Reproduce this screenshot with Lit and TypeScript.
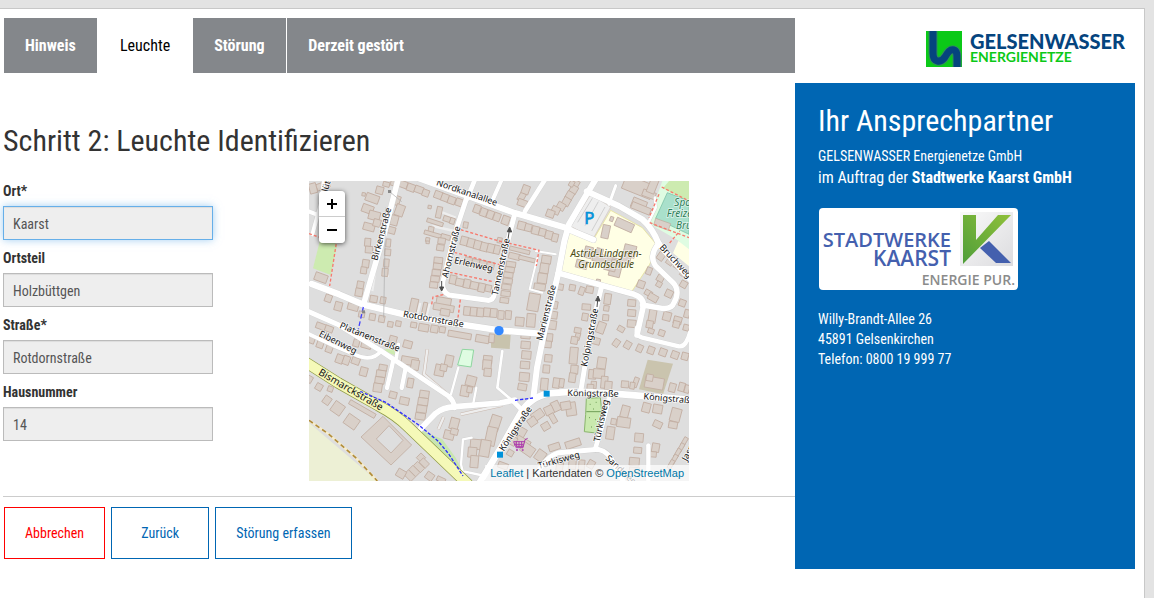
import { LitElement, html, svg, css } from "lit";
import { customElement, property } from "lit/decorators.js";

type Box = [number, number, number, number, number];

// Building footprints: centre x, centre y, width, height, rotation in degrees.
const BUILDINGS: Box[] = [
  // around Birkenstraße
  [42, 14, 40, 20, -20], [12, 22, 22, 30, -15], [212, 28, 22, 22, 15], [190, 52, 40, 24, 20], [176, 84, 34, 24, 20],
  [196, 104, 34, 26, 15], [180, 138, 34, 22, 15], [204, 126, 22, 22, 15], [232, 10, 20, 14, 15], [164, 40, 10, 10, 10],
  [262, 58, 22, 28, 20], [272, 88, 26, 34, 20], [256, 118, 22, 30, 15], [248, 148, 22, 20, 15], [176, 184, 18, 24, 5],
  [180, 206, 22, 20, 5], [238, 186, 14, 24, 5], [236, 214, 18, 20, 5], [170, 248, 20, 24, 8], [164, 268, 18, 20, 8],
  [232, 246, 16, 24, 5], [228, 274, 18, 24, 5], [154, 312, 20, 22, 10], [150, 334, 22, 24, 10],
  // top row along Nordkanalallee
  [256, 6, 22, 18, 18], [282, 10, 26, 20, 20], [306, 20, 24, 22, 20], [330, 26, 26, 20, 20], [350, 36, 20, 20, 20],
  [388, 42, 24, 22, 20], [408, 50, 22, 22, 20], [428, 58, 22, 22, 20], [450, 64, 20, 22, 20],
  [504, 84, 20, 24, 20], [524, 94, 20, 24, 20], [544, 101, 20, 24, 20], [564, 108, 20, 24, 20], [590, 118, 22, 26, 20],
  // west of Ahornstraße
  [362, 78, 10, 10, 10], [390, 94, 16, 34, 12], [378, 124, 50, 12, 18], [414, 114, 22, 16, 18], [430, 120, 14, 18, 18],
  [366, 146, 16, 18, 10], [372, 160, 54, 12, 16], [410, 168, 28, 14, 16], [356, 176, 12, 12, 10], [356, 184, 10, 8, 5],
  [398, 180, 22, 18, 8], [394, 200, 22, 18, 8], [388, 238, 26, 18, 6], [386, 256, 26, 18, 6], [382, 275, 26, 18, 6],
  [378, 294, 26, 18, 6], [374, 312, 24, 18, 6], [470, 132, 14, 18, 10],
  // Erlenweg rows
  [466, 180, 22, 26, 14], [486, 186, 22, 26, 14], [506, 192, 22, 26, 14], [526, 198, 22, 26, 14], [546, 202, 22, 26, 14], [564, 206, 18, 26, 14],
  [478, 240, 22, 22, 12], [500, 246, 22, 22, 12], [522, 250, 22, 22, 12], [544, 254, 22, 22, 12],
  [432, 296, 20, 26, 12], [452, 304, 24, 22, 12], [474, 308, 20, 26, 12], [496, 314, 24, 22, 12], [518, 320, 20, 26, 12], [538, 322, 18, 20, 12],
  // between Rotdornstraße and Platanenstraße
  [36, 290, 38, 24, 20], [58, 352, 20, 22, 20], [88, 376, 22, 26, 15], [132, 378, 32, 20, 15], [158, 400, 18, 18, 10],
  [190, 408, 18, 20, 10], [218, 414, 18, 20, 10], [244, 430, 16, 16, 10], [268, 428, 16, 16, 10], [314, 432, 18, 16, 10],
  [194, 354, 22, 20, 10], [222, 358, 16, 20, 10], [314, 376, 22, 46, 12], [346, 386, 12, 44, 12],
  [404, 362, 44, 24, 10], [404, 380, 62, 20, 10], [408, 394, 28, 20, 10],
  [474, 390, 20, 26, 5], [494, 392, 20, 26, 5], [514, 394, 20, 26, 5], [534, 394, 20, 26, 5], [554, 396, 20, 26, 5], [576, 402, 18, 26, 5], [598, 402, 18, 26, 5],
  [344, 440, 30, 22, 10], [376, 444, 22, 22, 10], [400, 446, 18, 18, 10], [36, 436, 30, 18, 20], [60, 444, 24, 18, 20],
  [8, 474, 20, 26, 20], [34, 488, 20, 26, 20], [62, 500, 20, 30, 20], [92, 534, 22, 26, 20], [112, 538, 20, 26, 20],
  [140, 540, 24, 20, 20], [142, 486, 18, 22, 15], [172, 492, 30, 20, 15], [252, 476, 22, 22, 15], [296, 490, 26, 22, 15],
  [164, 572, 22, 26, 15], [222, 560, 24, 18, 10], [216, 578, 28, 20, 8], [212, 598, 28, 20, 8], [206, 620, 26, 26, 8],
  [302, 540, 50, 24, 10], [318, 552, 24, 30, 10], [304, 606, 18, 28, 10], [252, 642, 22, 20, 15], [286, 660, 28, 22, 12],
  [346, 640, 28, 22, 8], [342, 662, 30, 22, 8], [338, 684, 30, 22, 8], [334, 706, 30, 20, 8],
  // south of Bismarckstraße
  [0, 594, 20, 20, 30], [30, 618, 20, 20, 30], [64, 624, 16, 16, 20], [54, 658, 22, 24, 35], [86, 682, 34, 34, 35],
  [128, 722, 40, 34, 35], [160, 684, 88, 14, 30],
  [336, 830, 20, 20, 45], [346, 846, 26, 18, 45], [330, 858, 30, 18, 45], [316, 870, 30, 18, 45], [302, 884, 30, 20, 45], [276, 878, 26, 24, 30],
  [362, 886, 24, 22, 35], [396, 896, 26, 14, 25],
  // centre
  [452, 462, 70, 18, 10], [520, 474, 40, 22, 10], [548, 472, 16, 26, 5], [420, 540, 24, 34, 12], [392, 568, 28, 34, 12],
  [404, 560, 20, 20, 12], [536, 536, 26, 24, 5], [534, 552, 26, 30, 5], [536, 574, 22, 24, 5], [486, 600, 30, 30, 15], [468, 630, 26, 32, 10], [482, 626, 16, 18, 10],
  [436, 728, 26, 34, 15], [420, 762, 30, 26, 15], [436, 752, 22, 18, 15],
  [558, 726, 30, 46, 18], [546, 766, 30, 56, 12], [500, 790, 32, 30, 5], [490, 814, 26, 30, 5], [496, 842, 24, 36, 5], [528, 802, 30, 50, 10],
  // north centre
  [638, 48, 26, 18, -60], [650, 26, 22, 26, 20], [640, 66, 28, 20, 20],
  [800, 10, 18, 24, 30], [794, 26, 22, 24, 30], [782, 44, 22, 24, 30], [772, 62, 22, 24, 30], [756, 76, 24, 22, 30], [740, 88, 24, 22, 25], [724, 98, 24, 22, 20], [788, 8, 14, 18, 30],
  [638, 134, 24, 24, 14], [658, 140, 20, 22, 14], [680, 148, 22, 24, 14], [700, 154, 20, 22, 14], [720, 162, 22, 24, 14], [738, 170, 18, 24, 14],
  [632, 208, 62, 12, 14], [616, 226, 34, 18, 14], [654, 234, 50, 12, 14],
  [712, 236, 28, 24, 8], [706, 262, 26, 30, 8], [700, 292, 28, 30, 8], [692, 318, 34, 20, 8], [674, 364, 34, 52, 10], [666, 418, 26, 40, 5], [632, 422, 26, 26, 5],
  [606, 250, 28, 16, 8], [602, 266, 28, 16, 8], [598, 282, 28, 16, 8], [596, 300, 28, 16, 8], [592, 318, 28, 16, 8], [590, 338, 28, 16, 8], [586, 358, 26, 16, 8],
  [572, 178, 14, 16, 10],
  // school and surroundings
  [946, 132, 56, 26, 24], [908, 114, 10, 14, 20], [890, 152, 22, 40, 12], [838, 214, 24, 34, 14], [818, 250, 34, 24, 14],
  [872, 210, 20, 16, 14], [890, 236, 80, 24, 14], [920, 262, 34, 50, 14], [962, 210, 36, 36, 14], [950, 232, 30, 30, 14], [902, 262, 34, 14, 14], [868, 300, 12, 10, 10],
  [988, 18, 92, 44, 22], [1020, 40, 40, 20, 20], [990, 70, 44, 30, 22], [996, 82, 60, 20, 22], [1032, 12, 24, 50, 22],
  [754, 318, 18, 18, 10], [790, 320, 18, 18, 10], [818, 330, 16, 24, 20], [842, 326, 22, 20, 10], [832, 378, 26, 18, 5],
  [828, 408, 18, 22, 10], [896, 354, 20, 32, 8], [892, 382, 16, 16, 8], [890, 410, 18, 18, 5],
  [736, 372, 20, 22, 10], [732, 402, 26, 22, 8], [730, 432, 24, 26, 8],
  [968, 366, 24, 20, 5], [968, 396, 24, 20, 5], [968, 428, 26, 22, 5], [996, 310, 22, 22, 20], [1018, 336, 22, 16, 30], [1032, 350, 30, 20, 30], [1020, 270, 16, 22, 20],
  [1056, 226, 20, 24, 35], [1084, 240, 20, 24, 35], [1106, 254, 20, 20, 35], [1126, 276, 20, 24, 35], [1054, 292, 20, 20, 30], [1080, 338, 22, 22, 25], [1050, 310, 16, 16, 30],
  [1124, 310, 20, 20, 30], [1120, 366, 20, 20, 20], [1074, 406, 24, 26, 15], [1030, 406, 22, 40, 10], [1022, 430, 20, 22, 10], [1106, 418, 24, 22, 15], [1134, 398, 16, 24, 15],
  [1102, 430, 20, 20, 15], [1132, 440, 18, 18, 15],
  // Marienstraße south
  [650, 464, 28, 18, 5], [650, 492, 28, 22, 5], [652, 522, 28, 24, 5], [648, 552, 28, 22, 5], [646, 588, 30, 26, 5], [640, 618, 26, 20, 10],
  [722, 470, 18, 24, 5], [716, 490, 22, 20, 5], [718, 532, 22, 22, 5], [712, 564, 20, 24, 5], [706, 610, 22, 36, 5], [742, 606, 20, 30, 8], [758, 606, 14, 26, 8],
  [806, 466, 14, 22, 15], [796, 478, 20, 22, 10], [794, 524, 24, 50, 5], [796, 566, 22, 26, 5], [790, 590, 20, 28, 8], [806, 448, 20, 16, 10],
  [876, 440, 24, 34, 20], [860, 480, 26, 20, 15], [878, 546, 26, 34, 8], [850, 580, 22, 28, 5], [870, 578, 34, 28, 5], [886, 604, 20, 36, 5], [854, 612, 16, 22, 5], [898, 614, 22, 26, 5], [844, 620, 20, 20, 5],
  [922, 486, 18, 22, 35], [956, 492, 20, 22, 30], [992, 502, 18, 22, 25], [1026, 508, 20, 22, 20], [1062, 514, 22, 22, 20], [1098, 522, 22, 22, 20], [1128, 526, 20, 22, 15],
  [936, 444, 20, 16, 30], [1026, 450, 18, 14, 20], [1058, 456, 18, 18, 20],
  [1036, 606, 56, 34, 10], [1022, 590, 20, 20, 10], [948, 610, 22, 20, 5], [980, 604, 14, 30, 20], [970, 614, 14, 20, 10], [1090, 620, 20, 26, 15], [1118, 618, 18, 26, 15], [1134, 624, 14, 24, 15],
  [948, 692, 24, 36, 15], [944, 724, 40, 30, 8], [914, 722, 16, 18, 10], [904, 756, 24, 38, 8],
  [1012, 680, 24, 28, 15], [1046, 684, 28, 26, 10], [1100, 702, 30, 40, 15], [1092, 732, 26, 20, 10], [1046, 730, 26, 20, 25],
  [990, 770, 26, 26, 5], [986, 808, 24, 18, 5], [1040, 800, 22, 26, 10], [1032, 820, 20, 16, 5], [976, 842, 30, 24, 5], [976, 868, 30, 18, 5],
  [1126, 782, 28, 12, -60], [1116, 800, 28, 12, -60], [1106, 816, 28, 12, -60], [1096, 834, 28, 12, -60], [1086, 850, 28, 12, -60],
  [786, 684, 30, 40, -8], [770, 674, 30, 24, -10], [740, 676, 24, 30, -25], [720, 688, 26, 26, -25], [732, 712, 16, 30, -30], [686, 702, 36, 26, -35], [670, 722, 26, 24, -35], [710, 736, 24, 22, -30],
  [630, 752, 40, 32, 30], [640, 786, 44, 30, 30], [656, 806, 40, 30, 35], [604, 816, 18, 18, 30], [582, 854, 30, 18, 20], [612, 780, 20, 26, 30], [694, 824, 28, 32, 35],
  [736, 798, 34, 20, -18], [792, 788, 46, 22, -18], [790, 850, 22, 30, 5], [818, 852, 18, 30, 5], [846, 850, 20, 24, 30], [752, 856, 20, 26, 10],
];

// Street centre lines and their drawn width.
const ROADS: [string, number][] = [
  ["M330-8 L573 80 L618 96 L773 141 L790 150 L853 176", 18],
  ["M268-8 L225 160 L163 372", 17],
  ["M473 51 L440 150 L402 300 Q396 330 420 342 L535 358 Q552 360 556 340 L582 235 L618 96", 15],
  ["M475 52 L500 -10", 14],
  ["M8 309 L90 340 L163 371 L288 401 L420 425 L573 448 L692 458", 19],
  ["M-5 390 L90 432 L218 511 L418 645 Q436 660 436 680", 15],
  ["M-5 457 L80 497 L138 521 Q190 545 218 508", 11],
  ["M253 538 L234 621", 13],
  ["M289 566 L278 621", 13],
  ["M268 490 L262 530", 11],
  ["M328 751 L380 697 Q400 680 438 677 L573 666 L618 657", 17],
  ["M513 903 L573 805 L633 700 Q660 650 720 637 L790 632 L848 634 L940 640 L1145 656", 20],
  ["M613 661 L642 690", 14],
  ["M862-8 L838 31 L780 130 L766 180 L748 276 L705 456 L684 560 L673 650", 18],
  ["M648 91 L708-4", 14],
  ["M545 70 L578-4", 12],
  ["M833 31 L930 75 L1000 115 Q1030 140 1050 190 L1145 296", 18],
  ["M1050 186 Q1018 225 1040 255 L1092 305 Q1115 330 1095 365 Q1088 385 1060 382 L1000 372", 16],
  ["M748 276 L888 316 L975 340 Q1008 352 1002 380 L984 462", 17],
  ["M984 440 Q978 465 1000 470 L1110 496 Q1130 500 1143 455", 13],
  ["M878 316 L845 450 L815 632", 15],
  ["M903 640 L875 750 L858 806", 14],
  ["M680 885 Q710 825 750 815 L868 805 Q900 812 916 850 L945 905", 15],
  ["M1018 793 L1018 903", 13],
  ["M45-5 L38 60 L10 160", 12],
  ["M-4 90 L22 100", 12],
  ["M448 560 L426 640", 7],
  ["M502 620 L492 672", 7],
  ["M468 900 L456 850 L462 775 L488 770 M468 872 L528 885", 7],
  ["M920 14 L900 70", 9],
  ["M1038 50 L1040 80 L1018 125", 8],
  ["M580 510 L565 620 L600 650 L613 661", 8],
  ["M680 210 L740 220 M685 230 L662 325 L700 335", 6],
];

// Street names: baseline start x, y, rotation in degrees, text.
const LABELS: [number, number, number, string][] = [
  [380, 12, 19, "Nordkanalallee"], [205, 240, -75, "Birkenstraße"], [416, 292, -76, "Ahornstraße"],
  [434, 246, 13, "Erlenweg"], [566, 344, -78, "Tannenstraße"], [281, 407, 10, "Rotdornstraße"],
  [90, 440, 22, "Platanenstraße"], [28, 464, 27, "Eibenweg"], [700, 480, -76, "Marienstraße"],
  [834, 558, -79, "Kolpingstraße"], [775, 645, 1, "Königstraße"], [1003, 655, 5, "Königstraße"],
  [584, 812, -56, "Königstraße"], [872, 784, -78, "Türkisweg"], [690, 864, -16, "Türkisweg"],
  [888, 834, 43, "Sandweg"], [1134, 842, -63, "Jasminweg"], [1050, 200, 47, "Bruchweg"], [56, 34, -75, "lütenweg"],
];

@customElement("street-map")
export class StreetMap extends LitElement {
  static styles = css`
    :host { display: block; position: relative; height: 300px; overflow: hidden; background: #dddddd; }
    .tiles { display: block; width: 100%; height: 100%; }
    .zoom { position: absolute; top: 10px; left: 10px; display: grid; border-radius: 4px; overflow: hidden; box-shadow: 0 1px 5px rgba(0, 0, 0, 0.65); }
    .zoom button { width: 26px; height: 26px; padding: 0; border: 0; background: #fff; color: #000; cursor: pointer; display: grid; place-items: center; }
    .zoom button:first-child { border-bottom: 1px solid #ccc; }
    .zoom svg { width: 12px; height: 12px; }
    .credit { position: absolute; right: 0; bottom: 0; padding: 0 5px; background: rgba(255, 255, 255, 0.7); color: #333; font: 11px/16px "Liberation Sans", Arial, sans-serif; white-space: nowrap; }
    .credit a { color: #0078a8; text-decoration: none; }
    .street { font: 27px "Noto Sans", sans-serif; fill: #111; stroke: #fff; stroke-opacity: 0.7; stroke-width: 5; paint-order: stroke; stroke-linejoin: round; }
    .major { font-size: 30px; stroke: #f7fabf; }
    .place { font: italic 30px "Noto Sans", sans-serif; fill: #4c4c12; stroke: #fff; stroke-opacity: 0.6; stroke-width: 5; paint-order: stroke; }
    .sport { fill: #2e7d57; }
    .parking { font: 50px "Noto Sans", sans-serif; fill: #0092da; stroke: #0092da; stroke-width: 2; }
  `;

  render() {
    return html`
      <svg class="tiles" viewBox="0 0 1140 900" preserveAspectRatio="xMidYMid slice" role="img" aria-label="Karte von Holzbüttgen">
        <rect width="1140" height="900" fill="#dedede" />
        <path d="M0 725 L205 900 H0Z" fill="#edf0d5" />
        <path d="M35 170 L85 190 L65 282 L12 262Z" fill="#cdebb0" />
        <path d="M218 508 L252 500 L262 524Z" fill="#cdebb0" />
        <path d="M330 745 L400 775 L440 830 L475 895 L400 820Z" fill="#c8e6b0" />
        <path d="M785 136 L845 40 L905 78 L853 172Z" fill="#eeeeee" stroke="#d5c9c0" stroke-width="2" />
        <path d="M828 134 L868 62 M806 124 L850 52 M848 150 L888 78" stroke="#d0d0d0" stroke-width="3" />
        <path d="M778 150 L853 176 L905 88 L1000 140 L1046 195 L1022 250 L968 332 L752 270Z" fill="#ffffe5" stroke="#e5e08a" stroke-width="2" />
        <path d="M1060 0 H1140 V240 L1110 180 L1016 125Z" fill="#dffce2" />
        <path d="M1080 0 H1140 V62 L1062 22Z" fill="#cdebb0" />
        <path d="M1075 35 L1140 60 V160 L1040 112Z" fill="#a9e0cb" stroke="#6fbb9f" stroke-width="2" />
        <path d="M1040 112 L1085 128 L1078 148 L1034 132Z" fill="#d9d0c9" stroke="#c0a998" stroke-width="2" />
        <path d="M1108 180 L1140 205 V256 L1092 216Z" fill="#ffffe5" />
        <path d="M460 505 L494 507 L486 558 L446 552Z" fill="#dffce2" stroke="#8fd6a0" stroke-width="3" />
        <path d="M546 460 L605 462 L602 504 L546 500Z" fill="#c8c3ad" />
        <path d="M1016 536 L1092 548 L1062 640 L990 625Z" fill="#cac4ae" />
        <path d="M832 652 L874 650 L878 690 L862 756 L826 752 L830 700Z" fill="#c9e9ae" stroke="#8ab56d" stroke-width="3" />
        <path d="M832 692 H876 M842 670h3 M860 664h3 M852 684h3 M840 710h3 M858 716h3 M846 738h3" stroke="#6f9e57" stroke-width="3" />
        <g fill="none" stroke="#eeeeee" stroke-width="7">
          <path d="M355 505 L345 580 L410 635 M388 745 L404 708 M455 700 L580 672" stroke="#c9b8ae" stroke-width="10" />
          <path d="M355 505 L345 580 L410 635 M388 745 L404 708 M455 700 L580 672" />
          <path d="M200 260 L190 330 M216 280 L240 285 M334 366 L322 410 M362 368 L350 412" />
          <path d="M390 90 L440 110 M370 135 L436 150" />
        </g>

        <g fill="#d9d0c9" stroke="#c2aea2" stroke-width="2.5">
          ${BUILDINGS.map(([x, y, w, h, r]) => svg`<rect x=${x - w / 2} y=${y - h / 2} width=${w} height=${h} transform="rotate(${r} ${x} ${y})" />`)}
          <path fill-rule="evenodd" d="M156 768 L222 706 L308 792 L246 852Z M202 774 L240 734 L282 778 L246 816Z" />
        </g>

        <g fill="none" stroke-linecap="round" stroke-linejoin="round">
          ${ROADS.map(([d, w]) => svg`<path d=${d} stroke="#cfcfcf" stroke-width=${w + 2} />`)}
          ${ROADS.map(([d, w]) => svg`<path d=${d} stroke="#ffffff" stroke-width=${w} />`)}
          <path d="M-8 545 L88 606 L208 674 Q262 702 300 740 L475 908" stroke="#8f9a45" stroke-width="34" />
          <path d="M-8 545 L88 606 L208 674 Q262 702 300 740 L475 908" stroke="#f5f9b8" stroke-width="30" />
        </g>

        <g fill="none" stroke-width="4">
          <path d="M0 158 L82 186 L62 315 M455 146 L570 180 L640 196 L690 208 L682 255 M436 214 L575 252 M422 274 L552 302 M368 370 L372 348 L406 340 M454 356 L445 425 M1058 18 L1140 60 M1022 125 L1140 170 M1082 186 L1112 150 M1050 40 L1020 110" stroke="#f7796d" stroke-dasharray="9 6" />
          <path d="M163 378 L148 445" stroke="#4040ff" stroke-dasharray="14 8" />
          <path d="M153 631 L230 664 L328 731 L388 781 L420 820 L462 885 M618 658 L672 651" stroke="#2b2bff" stroke-dasharray="10 5" />
          <path d="M0 718 L60 760 L140 830 L205 900" stroke="#f6eccb" stroke-width="7" />
          <path d="M0 718 L60 760 L140 830 L205 900" stroke="#b08c3c" stroke-width="5" stroke-dasharray="14 10" />
          <path d="M242 32 L278 62 M230 80 L224 410" stroke="#aaa" stroke-width="2" />
        </g>
        <g fill="#4d4d4d" stroke="#4d4d4d" stroke-width="3">
          <path d="M398 300 V320 M398 330 L392 318 H404Z" />
          <path d="M597 175 L601 148 M602 138 L595 152 L608 153Z" />
          <path d="M864 378 L866 358 M867 345 L860 359 L873 360Z" />
        </g>
        <rect x="237" y="27" width="9" height="9" fill="#888" />
        <rect x="159" y="388" width="9" height="9" fill="#888" />

        ${LABELS.map(([x, y, r, t]) => svg`<text class="street" transform="translate(${x} ${y}) rotate(${r})">${t}</text>`)}
        <text class="street major" transform="translate(26 580) rotate(30)">Bismarckstraße</text>
        <text class="place" text-anchor="middle" x="891" y="227">Astrid-Lindgren-</text>
        <text class="place" text-anchor="middle" x="891" y="262">Grundschule</text>
        <text class="place sport" x="1096" y="74">Sportplatz</text>
        <text class="place sport" x="1073" y="109">Freizeit</text>
        <text class="place sport" x="1101" y="144">Bruch</text>
        <text class="parking" x="826" y="128">P</text>
        <g fill="none" stroke="#ac39ac" stroke-width="3">
          <path d="M656 772 L648 776 L642 800 H620 M614 782 H646 M616 790 H644 M614 782 L619 796 H643 M622 782 V796 M630 782 V796 M638 782 V796" />
          <circle cx="624" cy="807" r="2" /><circle cx="641" cy="807" r="2" />
        </g>
        <rect x="704" y="629" width="18" height="18" fill="#0092da" />
        <rect x="564" y="812" width="18" height="18" fill="#0092da" />
        <circle cx="570" cy="449" r="14" fill="#3388ff" />
      </svg>
      <div class="zoom">
        <button type="button" aria-label="Vergrößern"><svg viewBox="0 0 12 12"><path d="M1 6H11M6 1V11" stroke="currentColor" stroke-width="2" /></svg></button>
        <button type="button" aria-label="Verkleinern"><svg viewBox="0 0 12 12"><path d="M1 6H11" stroke="currentColor" stroke-width="2" /></svg></button>
      </div>
      <div class="credit"><a href="#leaflet">Leaflet</a> | Kartendaten © <a href="#osm">OpenStreetMap</a></div>
    `;
  }
}

@customElement("address-field")
export class AddressField extends LitElement {
  @property() label = "";
  @property() value = "";
  @property({ type: Boolean }) active = false;

  static styles = css`
    :host { display: grid; gap: 5px; }
    label { font-weight: 700; line-height: 20px; }
    input { box-sizing: border-box; width: 100%; height: 34px; padding: 7px 9px 5px; border: 1px solid #bbb; background: #eee; color: #555; font: inherit; box-shadow: inset 0 1px 1px rgba(0, 0, 0, 0.075); border-radius: 0; outline: none; }
    .active { border-color: #66afe9; box-shadow: inset 0 1px 1px rgba(0, 0, 0, 0.075), 0 0 8px rgba(102, 175, 233, 0.6); }
  `;

  render() {
    return html`<label for="field">${this.label}</label>
      <input id="field" class=${this.active ? "active" : ""} readonly .value=${this.value} />`;
  }
}

@customElement("app-root")
export class AppRoot extends LitElement {
  static styles = css`
    :host { display: flow-root; min-height: 100vh; background: #e3e3e3; color: #333; font: 14px/20px "Roboto Condensed", "Liberation Sans Narrow", Roboto, sans-serif; }
    .page { box-sizing: border-box; min-height: calc(100vh - 8px); margin: 8px 9px 0 0; padding: 9px 9px 28px 3px; border: solid #c8c8c8; border-width: 1px 1px 0 0; background: #fff; display: grid; grid-template-columns: minmax(0, 1fr) 340px; align-items: start; }
    nav { display: flex; gap: 1px; margin-left: 1px; }
    nav a { box-sizing: border-box; min-width: 93px; padding: 0 21px; background: #84878b; color: #fff; font-size: 16px; line-height: 55px; font-weight: 700; text-decoration: none; white-space: nowrap; }
    nav .current { padding: 0 22px; background: #fff; color: #000; font-weight: 400; }
    nav .last { flex: 1; }
    h1, h2 { margin: 0; font-size: 30px; line-height: 33px; font-weight: 400; }
    h1 { margin: 51px 0 24px; }
    .step { display: grid; grid-template-columns: 210px minmax(0, 380px); column-gap: 96px; padding-bottom: 15px; border-bottom: 1px solid #ccc; }
    .fields { display: grid; gap: 8px; align-content: start; }
    .actions { display: flex; gap: 6px; padding: 10px 0 0 1px; }
    .actions button { min-width: 98px; height: 52px; padding: 0 20px; border: 1px solid #0066b3; background: #fff; color: #0066b3; font: inherit; cursor: pointer; }
    .actions .cancel { border-color: #f00; color: #f00; }
    .brand { display: block; width: 202px; height: 38px; margin: 13px 8px 14px auto; }
    .contact { padding: 21px 23px; min-height: 444px; background: #0066b3; color: #fff; }
    .contact p { margin: 0; }
    .contact h2 { margin-bottom: 9px; }
    .contact .lead { font-size: 16px; line-height: 24px; }
    .partner { display: block; width: 200px; height: 82px; margin: 18px 0 19px; }
  `;

  render() {
    return html`
      <div class="page">
        <main>
          <nav>
            <a href="#hinweis">Hinweis</a>
            <a href="#leuchte" class="current" aria-current="step">Leuchte</a>
            <a href="#stoerung">Störung</a>
            <a href="#gestoert" class="last">Derzeit gestört</a>
          </nav>
          <h1>Schritt 2: Leuchte Identifizieren</h1>
          <div class="step">
            <div class="fields">
              <address-field label="Ort*" value="Kaarst" active></address-field>
              <address-field label="Ortsteil" value="Holzbüttgen"></address-field>
              <address-field label="Straße*" value="Rotdornstraße"></address-field>
              <address-field label="Hausnummer" value="14"></address-field>
            </div>
            <street-map></street-map>
          </div>
          <div class="actions">
            <button type="button" class="cancel">Abbrechen</button>
            <button type="button">Zurück</button>
            <button type="button">Störung erfassen</button>
          </div>
        </main>
        <aside>
          <svg class="brand" viewBox="0 0 202 38" role="img" aria-label="Gelsenwasser Energienetze">
            <rect x="1" y="0" width="36" height="36" fill="#0bc918" />
            <path d="M8 0 V22 C8 32 16 32 20 26 C23 21 25 18 29 19 C32 20 32 24 32 28 V36" fill="none" stroke="#2f8f58" stroke-width="9" />
            <path d="M8 0 V22 C8 32 16 32 20 26 C23 21 25 18 29 19 C32 20 32 24 32 28 V36" fill="none" stroke="#05447e" stroke-width="7" />
            <text x="45" y="18" font-family="Lato" font-weight="900" font-size="20" fill="#05447e">GELSENWASSER</text>
            <text x="45" y="31" font-family="Lato" font-weight="700" font-size="14" fill="#0bc918">ENERGIENETZE</text>
          </svg>
          <section class="contact">
            <h2>Ihr Ansprechpartner</h2>
            <p>GELSENWASSER Energienetze GmbH</p>
            <p class="lead">im Auftrag der <strong>Stadtwerke Kaarst GmbH</strong></p>
            <svg class="partner" viewBox="0 0 200 82" role="img" aria-label="Stadtwerke Kaarst">
              <defs>
                <linearGradient id="leaf" x1="0" y1="1" x2="1" y2="0"><stop offset="0" stop-color="#4f9e3a" /><stop offset="1" stop-color="#8fc03a" /></linearGradient>
                <linearGradient id="tile" x1="0" y1="0" x2="1" y2="1"><stop offset="0" stop-color="#fafafa" /><stop offset="1" stop-color="#dcdcdf" /></linearGradient>
              </defs>
              <rect x="1" y="0" width="199" height="82" rx="4" fill="#fff" />
              <rect x="142" y="4" width="53" height="54" fill="url(#tile)" />
              <path d="M145 7 H158 V32 L180 7 H193 L145 56Z" fill="url(#leaf)" />
              <path d="M162 40 L171 33 L193 55 H178Z" fill="#4460ae" />
              <g font-family="Open Sans" fill="#4460ae" font-weight="600" text-anchor="end">
                <text x="133" y="39" font-size="20">STADTWERKE</text>
                <text x="133" y="58" font-size="21">KAARST</text>
              </g>
              <text x="197" y="77" font-family="Open Sans" font-weight="600" font-size="14" fill="#8b8b8b" text-anchor="end">ENERGIE PUR.</text>
            </svg>
            <p>Willy-Brandt-Allee 26</p>
            <p>45891 Gelsenkirchen</p>
            <p>Telefon: 0800 19 999 77</p>
          </section>
        </aside>
      </div>
    `;
  }
}
